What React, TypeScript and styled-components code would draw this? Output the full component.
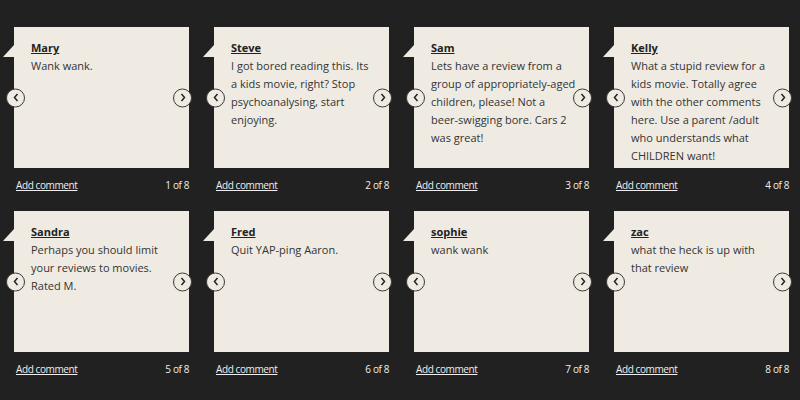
import React from "react";
import styled, { createGlobalStyle } from "styled-components";

const Global = createGlobalStyle`
  html, body { margin: 0; padding: 0; background: #212121; }
  body { font-family: "Open Sans", "Liberation Sans", sans-serif; }
`;

const Grid = styled.div`
  display: grid;
  grid-template-columns: repeat(4, 200px);
  row-gap: 17px;
  padding-top: 27px;
  width: 800px;
`;

const Item = styled.div`
  display: flex;
  flex-direction: column;
  margin-left: 14px;
  width: 175px;
`;

const Card = styled.div`
  position: relative;
  height: 141px;
  background: #efebe3;
  padding: 12px 12px 0 17px;
  box-sizing: border-box;
  &::before {
    content: "";
    position: absolute;
    left: -11px;
    top: 18px;
    width: 11px;
    height: 12px;
    background: #efebe3;
    clip-path: polygon(100% 0, 100% 100%, 0 100%);
  }
`;

const Name = styled.a`
  display: block;
  font-size: 11px;
  font-weight: 700;
  line-height: 18px;
  color: #222;
  text-decoration: underline;
`;

const Body = styled.p`
  margin: 0;
  font-size: 11px;
  line-height: 18px;
  color: #333;
`;

const NoBreak = styled.span`
  white-space: nowrap;
`;

const Nav = styled.button<{ $side: "left" | "right" }>`
  position: absolute;
  top: 50%;
  ${(p) => (p.$side === "left" ? "left: -8px;" : "right: -3px;")}
  transform: translateY(-50%);
  width: 19px;
  height: 19px;
  padding: 0;
  border-radius: 50%;
  border: 1.5px solid #3a3a3a;
  background: #efebe3;
  display: flex;
  align-items: center;
  justify-content: center;
  box-sizing: border-box;
  cursor: pointer;
`;

const Footer = styled.div`
  display: flex;
  justify-content: space-between;
  margin-top: 8px;
  padding-left: 2px;
  font-size: 10px;
  letter-spacing: -0.4px;
  line-height: 18px;
  color: #eeeeee;
`;

const AddLink = styled.a`
  color: #eeeeee;
  text-decoration: underline;
`;

const Chevron = ({ dir }: { dir: "left" | "right" }) => (
  <svg width="8" height="10" viewBox="0 0 8 10">
    <path
      d={dir === "left" ? "M5.5 1.5 L2.5 5 L5.5 8.5" : "M2.5 1.5 L5.5 5 L2.5 8.5"}
      fill="none"
      stroke="#222"
      strokeWidth="1.5"
    />
  </svg>
);

const comments: { name: string; text: React.ReactNode }[] = [
  { name: "Mary", text: "Wank wank." },
  {
    name: "Steve",
    text: (
      <>
        I got bored reading this. Its <NoBreak>a kids</NoBreak> movie, right? Stop psychoanalysing, start enjoying.
      </>
    ),
  },
  {
    name: "Sam",
    text: (
      <>
        Lets have a review from a group of <NoBreak>appropriately-aged</NoBreak> children, please! Not a{" "}
        <NoBreak>beer-swigging</NoBreak> bore. Cars 2 was great!
      </>
    ),
  },
  { name: "Kelly", text: "What a stupid review for a kids movie. Totally agree with the other comments here. Use a parent /adult who understands what CHILDREN want!" },
  { name: "Sandra", text: "Perhaps you should limit your reviews to movies. Rated M." },
  { name: "Fred", text: "Quit YAP-ping Aaron." },
  { name: "sophie", text: "wank wank" },
  { name: "zac", text: "what the heck is up with that review" },
];

export default function App() {
  return (
    <>
      <Global />
      <Grid>
        {comments.map((c, i) => (
          <Item key={i}>
            <Card>
              <Name>{c.name}</Name>
              <Body>{c.text}</Body>
              <Nav $side="left" aria-label="Previous"><Chevron dir="left" /></Nav>
              <Nav $side="right" aria-label="Next"><Chevron dir="right" /></Nav>
            </Card>
            <Footer>
              <AddLink>Add comment</AddLink>
              <span>{i + 1} of {comments.length}</span>
            </Footer>
          </Item>
        ))}
      </Grid>
    </>
  );
}
